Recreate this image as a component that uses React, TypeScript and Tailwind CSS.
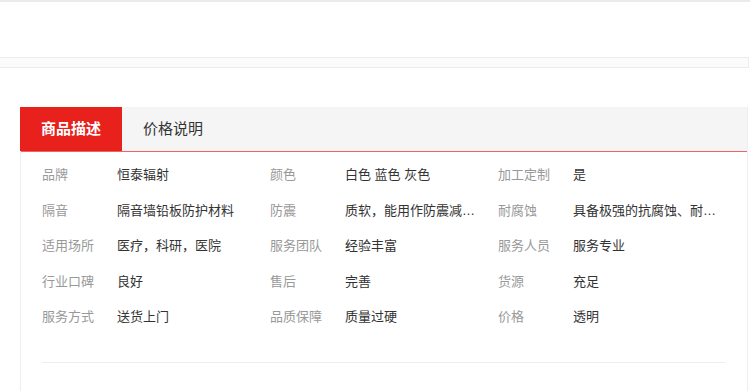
import React from "react";

const rows: [string, string][][] = [
  [["品牌", "恒泰辐射"], ["颜色", "白色 蓝色 灰色"], ["加工定制", "是"]],
  [["隔音", "隔音墙铅板防护材料"], ["防震", "质软，能用作防震减震材料"], ["耐腐蚀", "具备极强的抗腐蚀、耐酸碱性能"]],
  [["适用场所", "医疗，科研，医院"], ["服务团队", "经验丰富"], ["服务人员", "服务专业"]],
  [["行业口碑", "良好"], ["售后", "完善"], ["货源", "充足"]],
  [["服务方式", "送货上门"], ["品质保障", "质量过硬"], ["价格", "透明"]],
];

export default function App() {
  return (
    <div
      className="w-[750px] h-[391px] overflow-hidden bg-white"
      style={{ fontFamily: '"Liberation Sans", "Noto Sans CJK SC", sans-serif' }}
    >
      <div className="h-[2px] bg-[#ebebeb]" />
      <div className="h-[55px] bg-white" />
      <div className="h-[11px] w-[749px] bg-[#fbfbfb] border-t border-b border-r border-[#ececec]" />
      <div className="h-[39px]" />
      <div className="ml-[20px] w-[728px] h-[284px] border-l border-r border-[#eeeeee]">
        <div className="flex h-[45px] bg-[#f5f5f5] border-b border-[#ee6464]">
          <div className="w-[102px] -ml-px bg-[#e8211d] text-white font-bold text-[15px] flex items-center justify-center">
            商品描述
          </div>
          <div className="w-[102px] text-[#333] text-[15px] flex items-center justify-center">
            价格说明
          </div>
        </div>
        <div className="pt-[5px] pl-[21px]">
          {rows.map((r, i) => (
            <div key={i} className="flex h-[35.5px] items-center text-[13px]">
              {r.map(([k, v], j) => (
                <div key={j} className="flex w-[228px] items-center">
                  <div className="w-[75px] shrink-0 text-[#999]">{k}</div>
                  <div
                    className={
                      "text-[#333] whitespace-nowrap overflow-hidden text-ellipsis " +
                      (j === 2 ? "max-w-[150px]" : "max-w-[140px]")
                    }
                  >
                    {v}
                  </div>
                </div>
              ))}
            </div>
          ))}
          <div className="mt-[27px] w-[683px] h-px bg-[#eeeeee]" />
        </div>
      </div>
    </div>
  );
}
